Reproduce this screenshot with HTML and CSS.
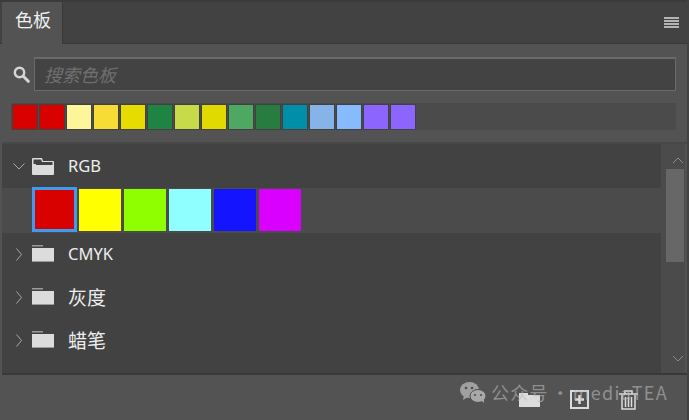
FILE: index.html
```html
<!DOCTYPE html>
<html lang="zh-CN">
<head>
    <meta charset="UTF-8">
    <title>色板</title>
    <link rel="stylesheet" href="styles.css">
</head>
<body>
    <div class="panel">
        <div class="tabbar">
            <div class="tab">色板</div>
            <svg class="menu-icon" width="15" height="11" viewBox="0 0 15 11"><path d="M0 0h15v2H0zM0 3h15v2H0zM0 6h15v2H0zM0 9h15v2H0z" fill="#b4b4b4"/></svg>
        </div>
        <div class="search-row">
            <svg class="search-icon" width="17" height="17" viewBox="0 0 17 17"><circle cx="6.5" cy="6.5" r="4.7" fill="none" stroke="#d6d6d6" stroke-width="2.4"/><path d="M10 10l5.3 5.3" stroke="#d6d6d6" stroke-width="3" stroke-linecap="round"/></svg>
            <div class="search-input">搜索色板</div>
        </div>
        <div class="recent">
            <span class="chip" style="background:#d90000"></span>
            <span class="chip" style="background:#d90000"></span>
            <span class="chip" style="background:#fff69b"></span>
            <span class="chip" style="background:#f6dc35"></span>
            <span class="chip" style="background:#e6dc00"></span>
            <span class="chip" style="background:#1f8443"></span>
            <span class="chip" style="background:#c6da4a"></span>
            <span class="chip" style="background:#e0da00"></span>
            <span class="chip" style="background:#4fa862"></span>
            <span class="chip" style="background:#287c40"></span>
            <span class="chip" style="background:#008fa8"></span>
            <span class="chip" style="background:#86b4e8"></span>
            <span class="chip" style="background:#86bcff"></span>
            <span class="chip" style="background:#8c64ff"></span>
            <span class="chip" style="background:#8c64ff"></span>
        </div>
        <div class="list-wrap">
            <div class="list">
                <div class="row row-first">
                    <svg class="chevron-open" width="12" height="7" viewBox="0 0 12 7"><path d="M.5.5l5.500 5.500L11.500.5" fill="none" stroke="#a8a8a8" stroke-width="1"/></svg>
                    <svg class="folder" width="22" height="17" viewBox="0 0 22 17"><path d="M0 1a1 1 0 0 1 1-1h9l1 3h10a1 1 0 0 1 1 1v12a1 1 0 0 1-1 1H1a1 1 0 0 1-1-1z" fill="#dcdcdc"/><path d="M1.500 1.500h7.500l1 2.500h10.500v3H4v-1H1.500z" fill="#424242"/></svg>
                    <span class="row-name">RGB</span>
                </div>
                <div class="swatch-row">
                    <span class="swatch selected" style="background:#d90000"></span>
                    <span class="swatch" style="background:#ffff00"></span>
                    <span class="swatch" style="background:#8fff00"></span>
                    <span class="swatch" style="background:#8fffff"></span>
                    <span class="swatch" style="background:#1414ff"></span>
                    <span class="swatch" style="background:#d900ff"></span>
                </div>
                <div class="row">
                    <svg class="chevron" width="6" height="13" viewBox="0 0 6 13"><path d="M.5.5l5 6-5 6" fill="none" stroke="#a8a8a8" stroke-width="1"/></svg>
                    <svg class="folder closed" width="22" height="17" viewBox="0 0 22 17"><path d="M0 0h11v1.500H0z" fill="#9a9a9a"/><path d="M0 3h22v14H0z" fill="#dcdcdc"/><path d="M0 16h22v1H0z" fill="#9a9a9a"/></svg>
                    <span class="row-name">CMYK</span>
                </div>
                <div class="row">
                    <svg class="chevron" width="6" height="13" viewBox="0 0 6 13"><path d="M.5.5l5 6-5 6" fill="none" stroke="#a8a8a8" stroke-width="1"/></svg>
                    <svg class="folder closed" width="22" height="17" viewBox="0 0 22 17"><path d="M0 0h11v1.500H0z" fill="#9a9a9a"/><path d="M0 3h22v14H0z" fill="#dcdcdc"/><path d="M0 16h22v1H0z" fill="#9a9a9a"/></svg>
                    <span class="row-name cjk">灰度</span>
                </div>
                <div class="row">
                    <svg class="chevron" width="6" height="13" viewBox="0 0 6 13"><path d="M.5.5l5 6-5 6" fill="none" stroke="#a8a8a8" stroke-width="1"/></svg>
                    <svg class="folder closed" width="22" height="17" viewBox="0 0 22 17"><path d="M0 0h11v1.500H0z" fill="#9a9a9a"/><path d="M0 3h22v14H0z" fill="#dcdcdc"/><path d="M0 16h22v1H0z" fill="#9a9a9a"/></svg>
                    <span class="row-name cjk">蜡笔</span>
                </div>
            </div>
            <div class="scrollbar">
                <svg class="arrow" width="12" height="7" viewBox="0 0 12 7"><path d="M1 6l5-5 5 5" fill="none" stroke="#8c8c8c" stroke-width="1"/></svg>
                <div class="thumb"></div>
                <svg class="arrow arrow-down" width="12" height="7" viewBox="0 0 12 7"><path d="M1 1l5 5 5-5" fill="none" stroke="#8c8c8c" stroke-width="1"/></svg>
            </div>
        </div>
        <div class="footer">
            <svg width="21" height="14" viewBox="0 0 21 14"><path d="M0 0h9v2h12v12H0z" fill="#dcdcdc"/></svg>
            <svg width="19" height="19" viewBox="0 0 19 19"><path d="M1 1h17v17H1z" fill="none" stroke="#dcdcdc" stroke-width="2"/><path d="M9.500 5v9M5 9.500h9" stroke="#dcdcdc" stroke-width="2.500"/></svg>
            <svg width="19" height="20" viewBox="0 0 19 20"><path d="M0 4h19M6 4V1h7v3" fill="none" stroke="#dcdcdc" stroke-width="1.500"/><path d="M3 5v14h13V5M6.500 7v10M9.500 7v10M12.500 7v10" fill="none" stroke="#dcdcdc" stroke-width="1.500"/></svg>
        </div>
        <div class="watermark">
            <svg width="26" height="21" viewBox="0 0 26 21"><ellipse cx="9.500" cy="8" rx="9.500" ry="8" fill="#a0a0a0"/><path d="M4 13l-1 5 5-3z" fill="#a0a0a0"/><ellipse cx="18" cy="14" rx="8" ry="6.500" fill="#a8a8a8" stroke="#4f4f4f"/><path d="M21 18l3 3v-5z" fill="#a8a8a8"/><circle cx="6" cy="6" r="1.300" fill="#4f4f4f"/><circle cx="12" cy="6" r="1.300" fill="#4f4f4f"/><circle cx="15" cy="13" r="1.100" fill="#4f4f4f"/><circle cx="21" cy="13" r="1.100" fill="#4f4f4f"/></svg>
            <span>公众号 · mediaTEA</span>
        </div>
    </div>
</body>
</html>
```

FILE: styles.css
```css
body {
    margin: 0;
    padding: 0;
    background-color: #535353;
}
.panel {
    position: relative;
    width: 689px;
    height: 420px;
    overflow: hidden;
    box-sizing: border-box;
    background-color: #535353;
    border-right: 2px solid #424242;
    font-family: "Noto Sans", "Noto Sans CJK SC", sans-serif;
}
.tabbar {
    display: flex;
    align-items: flex-end;
    justify-content: space-between;
    box-sizing: border-box;
    height: 44px;
    padding-left: 2px;
    background-color: #424242;
    border-top: 2px solid #3b3b3b;
    border-bottom: 1px solid #383838;
}
.tab {
    box-sizing: border-box;
    width: 61px;
    height: 42px;
    margin-bottom: -1px;
    padding-left: 13px;
    background-color: #535353;
    border-right: 1px solid #383838;
    color: #f0f0f0;
    font-family: "Noto Sans CJK SC", sans-serif;
    font-size: 18px;
    line-height: 35px;
}
.menu-icon {
    margin: 0 8px 15px 0;
}
.search-row {
    display: flex;
    align-items: center;
    height: 34px;
    margin-top: 13px;
    padding-left: 13px;
}
.search-icon {
    margin-right: 4px;
}
.search-input {
    box-sizing: border-box;
    width: 642px;
    height: 34px;
    padding-left: 9px;
    background-color: #434343;
    border: 2px solid #6a6a6a;
    border-width: 2px 1px 1px 1px;
    color: #6f6f6f;
    font-family: "Noto Sans CJK SC", sans-serif;
    font-size: 18px;
    font-style: italic;
    line-height: 30px;
}
.recent {
    display: flex;
    gap: 3px;
    box-sizing: border-box;
    width: 665px;
    height: 27px;
    margin: 12px 0 0 11px;
    padding: 2px 0 0 2px;
    background-color: #4b4b4b;
}
.chip {
    width: 24px;
    height: 24px;
    outline: 1px solid #414141;
}
.list-wrap {
    display: flex;
    height: 233px;
    margin: 12px 0 0 2px;
    border-top: 2px solid #484848;
    border-bottom: 2px solid #393939;
    box-sizing: border-box;
}
.list {
    width: 659px;
    background-color: #424242;
}
.row {
    display: flex;
    align-items: center;
    height: 43px;
}
.row-first {
    height: 44px;
}
.chevron-open {
    margin: 0 0 0 11px;
}
.chevron {
    margin-left: 14px;
}
.chevron-open + .folder {
    margin-left: 7px;
}
.chevron + .folder {
    margin-left: 10px;
}
.folder.closed {
    margin-bottom: 2px;
}
.row-name {
    margin-left: 14px;
    margin-bottom: 2px;
    color: #eeeeee;
    font-size: 16.5px;
}
.row-name.cjk {
    font-family: "Noto Sans CJK SC", sans-serif;
    font-size: 19px;
}
.swatch-row {
    display: flex;
    align-items: center;
    gap: 3px;
    height: 45px;
    padding-left: 30px;
    background-color: #4b4b4b;
}
.swatch {
    width: 42px;
    height: 42px;
    margin-bottom: 1px;
}
.swatch.selected {
    box-sizing: border-box;
    width: 45px;
    height: 45px;
    margin-bottom: 2px;
    margin-right: -1px;
    border: 3px solid #3f9bf0;
}
.scrollbar {
    display: flex;
    flex-direction: column;
    width: 24px;
    padding-top: 13px;
    box-sizing: border-box;
    background-color: #4b4b4b;
}
.arrow {
    margin-left: 11px;
}
.thumb {
    width: 18px;
    height: 93px;
    margin: 5px 0 0 5px;
    background-color: #676767;
}
.arrow-down {
    margin-top: auto;
    margin-bottom: 11px;
}
.footer {
    display: flex;
    align-items: center;
    justify-content: flex-end;
    gap: 30px;
    height: 43px;
    padding-right: 49px;
    padding-top: 6px;
    box-sizing: border-box;
}
.watermark {
    position: absolute;
    left: 460px;
    top: 379px;
    display: flex;
    align-items: center;
    gap: 5px;
    color: rgba(185, 185, 185, 0.62);
    font-family: "Noto Sans CJK SC", sans-serif;
    font-size: 18px;
    letter-spacing: 1.3px;
    word-spacing: -3px;
}
```
